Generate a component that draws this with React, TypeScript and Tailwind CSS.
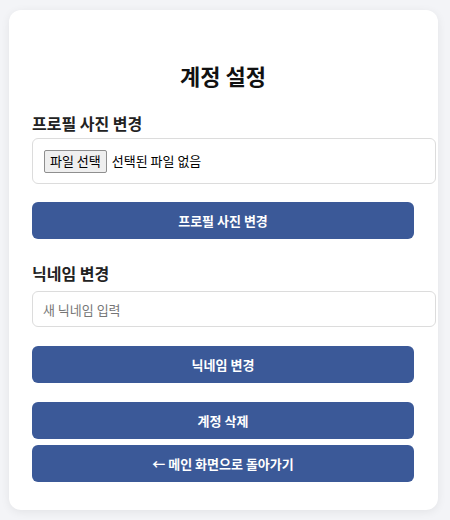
import React, { useState } from "react";

const font = { fontFamily: '"Noto Sans CJK KR", "Noto Sans", sans-serif' };

function PrimaryButton({ children, className = "" }: { children: React.ReactNode; className?: string }) {
  return (
    <button
      className={`w-full h-[37px] rounded-[6px] bg-[#3b5998] text-white text-[13px] font-bold flex items-center justify-center ${className}`}
    >
      {children}
    </button>
  );
}

function App() {
  const [nickname, setNickname] = useState("");

  return (
    <div className="min-h-[520px] bg-[#f3f4f7] pt-[10px] pl-[9px]" style={font}>
      {/* Card */}
      <div className="w-[429px] bg-white rounded-[12px] shadow-[0_2px_10px_rgba(0,0,0,0.07)] pt-[50px] pb-[28px] pl-[23px] pr-[24px]">
        <h2 className="h-[30px] leading-[30px] text-center text-[22px] font-bold text-[#111]">
          계정 설정
        </h2>

        <div className="mt-[23px] h-[20px] leading-[20px] text-[16px] font-bold text-[#222]">
          프로필 사진 변경
        </div>
        <div className="mt-[5px] w-[404px] h-[46px] border border-[#dcdcdc] rounded-[6px] flex items-center pl-[11px]">
          <span className="h-[23px] px-[5px] flex items-center border border-[#8f8f8f] rounded-[2px] bg-[#efefef] text-[13px] text-black">
            파일 선택
          </span>
          <span className="ml-[5px] text-[13px] text-black">선택된 파일 없음</span>
        </div>
        <PrimaryButton className="mt-[18px]">프로필 사진 변경</PrimaryButton>

        <div className="mt-[24px] h-[20px] leading-[20px] text-[16px] font-bold text-[#222]">
          닉네임 변경
        </div>
        <input
          value={nickname}
          onChange={(e) => setNickname(e.target.value)}
          placeholder="새 닉네임 입력"
          className="mt-[8px] w-[404px] h-[36px] border border-[#dcdcdc] rounded-[6px] px-[10px] text-[13px] text-black placeholder:text-[#767676] outline-none block"
          style={font}
        />
        <PrimaryButton className="mt-[19px]">닉네임 변경</PrimaryButton>

        <PrimaryButton className="mt-[19px]">계정 삭제</PrimaryButton>
        <PrimaryButton className="mt-[6px]">← 메인 화면으로 돌아가기</PrimaryButton>
      </div>
    </div>
  );
}

export default App;
